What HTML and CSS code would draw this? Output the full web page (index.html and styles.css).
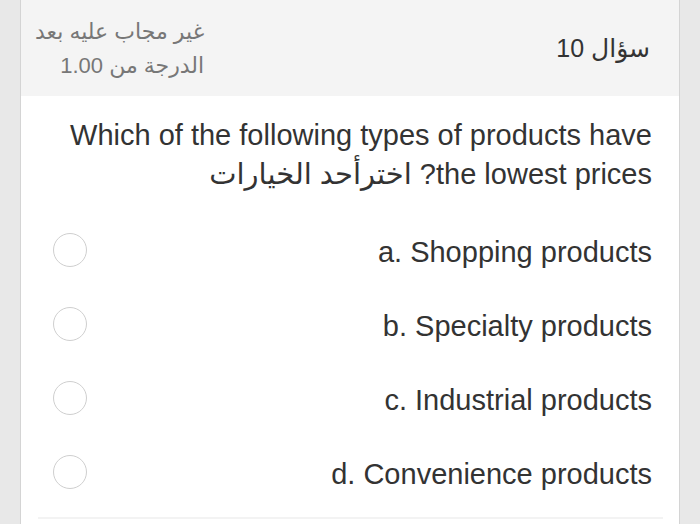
FILE: index.html
```html
<!DOCTYPE html>
<html lang="ar" dir="rtl">
<head>
<meta charset="utf-8">
<link rel="stylesheet" href="styles.css">
</head>
<body>
<div class="card">
  <div class="header">
    <div class="qno">سؤال 10</div>
    <div class="info">
      <div>غير مجاب عليه بعد</div>
      <div>الدرجة من 1.00</div>
    </div>
  </div>
  <div class="body">
    <p class="question">Which of the following types of products have the lowest prices? اخترأحد الخيارات</p>
    <div class="options">
      <label class="opt"><span class="label">a. Shopping products</span><span class="radio"></span></label>
      <label class="opt"><span class="label">b. Specialty products</span><span class="radio"></span></label>
      <label class="opt"><span class="label">c. Industrial products</span><span class="radio"></span></label>
      <label class="opt"><span class="label">d. Convenience products</span><span class="radio"></span></label>
    </div>
    <div class="next"></div>
  </div>
</div>
</body>
</html>
```
FILE: styles.css
```css
html, body {
  margin: 0;
  padding: 0;
}
body {
  background: #e8e8e8;
  font-family: "Liberation Sans", "DejaVu Sans", sans-serif;
  color: #333;
}
.card {
  margin: 0 20px;
  background: #fff;
  border-left: 1px solid #d4d4d4;
  border-right: 1px solid #d4d4d4;
  height: 524px;
  overflow: hidden;
}
.header {
  height: 96px;
  background: #f4f4f4;
  display: flex;
  justify-content: space-between;
  align-items: flex-start;
  padding: 0 29px 0 14px;
}
.qno {
  margin-top: 33px;
  font-size: 25px;
  line-height: 30px;
  color: #333;
}
.info {
  margin-top: 15px;
  font-size: 22px;
  line-height: 34px;
  color: #777;
  text-align: right;
}
.body {
  padding: 0 27px 0 32px;
}
.question {
  margin: 20px 0 0;
  font-size: 29px;
  line-height: 39px;
  color: #333;
}
.options {
  margin-top: 19px;
  display: flex;
  flex-direction: column;
}
.opt {
  height: 74px;
  display: flex;
  align-items: center;
  justify-content: space-between;
}
.label {
  font-size: 29px;
  color: #333;
  direction: ltr;
  padding-top: 5px;
}
.radio {
  width: 32px;
  height: 32px;
  border: 1.5px solid #cfcfcf;
  border-radius: 50%;
}
.next {
  margin: 8px -11px 0 -15px;
  border-top: 2px solid #f3f3f3;
  height: 10px;
}
```
